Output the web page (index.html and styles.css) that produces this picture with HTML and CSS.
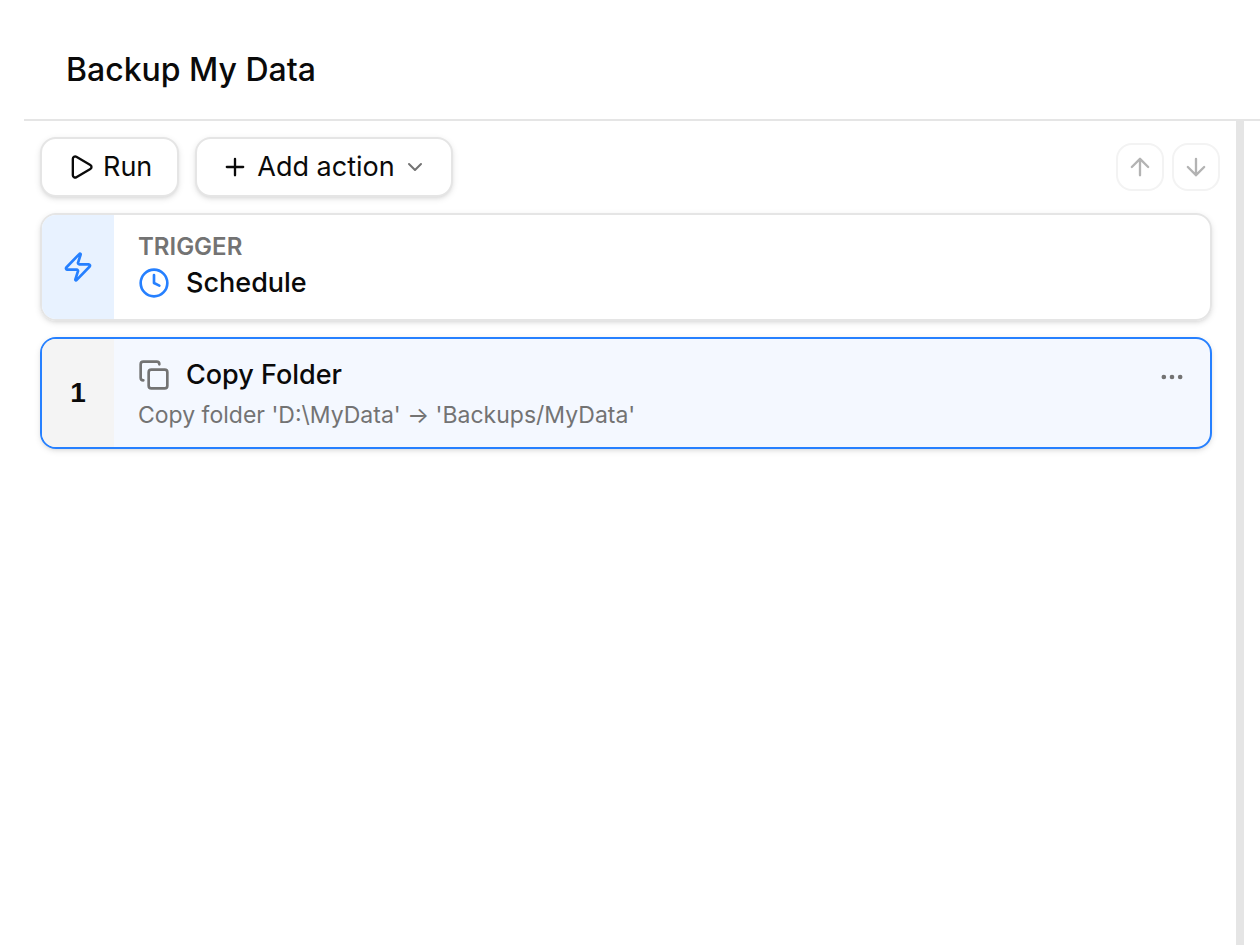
FILE: index.html
```html
<!DOCTYPE html>
<html lang="en">
<head>
    <meta charset="UTF-8">
    <meta name="viewport" content="width=device-width, initial-scale=1.0">
    <title>Backup My Data</title>
    <link rel="stylesheet" href="styles.css">
</head>
<body>
    <div class="app">
        <header class="header">
            <h1>Backup My Data</h1>
        </header>
        <div class="workspace">
            <main class="editor">
                <div class="toolbar">
                    <button class="btn btn-run" type="button">
                        <svg class="icon" viewBox="0 0 24 24"><path d="M5 5a2 2 0 0 1 3.008-1.728l11.997 6.998a2 2 0 0 1 .003 3.458l-12 7A2 2 0 0 1 5 19z"/></svg>
                        <span>Run</span>
                    </button>
                    <button class="btn" type="button">
                        <svg class="icon" viewBox="0 0 24 24"><path d="M5 12h14M12 5v14"/></svg>
                        <span>Add action</span>
                        <svg class="icon icon-chevron" viewBox="0 0 24 24"><path d="m6 9 6 6 6-6"/></svg>
                    </button>
                    <div class="move">
                        <button class="btn-move" type="button" aria-label="Move up" disabled>
                            <svg class="icon" viewBox="0 0 24 24"><path d="m5 12 7-7 7 7M12 19V5"/></svg>
                        </button>
                        <button class="btn-move" type="button" aria-label="Move down" disabled>
                            <svg class="icon" viewBox="0 0 24 24"><path d="M12 5v14M19 12l-7 7-7-7"/></svg>
                        </button>
                    </div>
                </div>
                <section class="card">
                    <div class="rail rail-trigger">
                        <svg class="icon icon-large" viewBox="0 0 24 24"><path d="M4 14a1 1 0 0 1-.78-1.63l9.9-10.2a.5.5 0 0 1 .86.46l-1.92 6.02A1 1 0 0 0 13 10h7a1 1 0 0 1 .78 1.63l-9.9 10.2a.5.5 0 0 1-.86-.46l1.92-6.02A1 1 0 0 0 11 14z"/></svg>
                    </div>
                    <div class="card-body">
                        <p class="label">TRIGGER</p>
                        <div class="card-title">
                            <svg class="icon icon-large icon-clock" viewBox="0 0 24 24"><circle cx="12" cy="12" r="10"/><path d="M12 6v6l4 2"/></svg>
                            <h2>Schedule</h2>
                        </div>
                    </div>
                </section>
                <section class="card card-selected">
                    <div class="rail rail-number">1</div>
                    <div class="card-body">
                        <div class="card-title">
                            <svg class="icon icon-large icon-copy" viewBox="0 0 24 24"><rect x="8" y="8" width="14" height="14" rx="2"/><path d="M4 16c-1.100 0-2-.9-2-2V4c0-1.100.9-2 2-2h10c1.100 0 2 .9 2 2"/></svg>
                            <h2>Copy Folder</h2>
                        </div>
                        <p class="summary">Copy folder 'D:\MyData' → 'Backups/MyData'</p>
                    </div>
                    <button class="btn-more" type="button" aria-label="More">
                        <svg class="icon" viewBox="0 0 24 24"><circle cx="12" cy="12" r="1"/><circle cx="19" cy="12" r="1"/><circle cx="5" cy="12" r="1"/></svg>
                    </button>
                </section>
            </main>
            <div class="splitter"></div>
        </div>
    </div>
</body>
</html>
```
FILE: styles.css
```css
* {
    box-sizing: border-box;
}
body {
    margin: 0;
    background: #fff;
    color: #0a0a0a;
    font-family: Inter, "Liberation Sans", sans-serif;
}
h1, h2, p {
    margin: 0;
}
button {
    font: inherit;
    color: inherit;
    background: #fff;
    padding: 0;
}
.app {
    display: flex;
    flex-direction: column;
    min-height: 100vh;
    padding-left: 24px;
}
.header {
    padding: 50px 42px 29px;
    border-bottom: 2px solid #e5e5e5;
}
.header h1 {
    font-size: 32px;
    line-height: 40px;
    font-weight: 500;
}
.workspace {
    display: flex;
    flex: 1;
}
.editor {
    flex: 1;
    padding: 16px 24px 16px 16px;
}
.splitter {
    width: 8px;
    margin-right: 16px;
    background: #e5e5e5;
}
.icon {
    display: block;
    flex: none;
    width: 28px;
    height: 28px;
    fill: none;
    stroke: currentColor;
    stroke-width: 2;
    stroke-linecap: round;
    stroke-linejoin: round;
}
.icon-large {
    width: 32px;
    height: 32px;
}
.toolbar {
    display: flex;
    align-items: center;
    gap: 16px;
    margin-bottom: 16px;
}
.btn {
    display: flex;
    align-items: center;
    gap: 8px;
    height: 60px;
    padding: 0 24px;
    border: 2px solid #e5e5e5;
    border-radius: 16px;
    box-shadow: 0 2px 6px rgba(0, 0, 0, 0.1), 0 2px 4px -2px rgba(0, 0, 0, 0.1);
    font-size: 27px;
    line-height: 40px;
}
.btn-run {
    padding: 0 25px;
}
.icon-chevron {
    width: 24px;
    height: 24px;
    color: #737373;
}
.move {
    display: flex;
    gap: 8px;
    margin-left: auto;
    margin-right: -8px;
}
.btn-move {
    display: grid;
    place-items: center;
    width: 48px;
    height: 48px;
    border: 2px solid #f3f3f3;
    border-radius: 16px;
    color: #b3b3b3;
}
.card {
    display: flex;
    margin-bottom: 16px;
    border: 2px solid #e5e5e5;
    border-radius: 16px;
    box-shadow: 0 2px 6px rgba(0, 0, 0, 0.1), 0 2px 4px -2px rgba(0, 0, 0, 0.1);
    overflow: hidden;
}
.card-selected {
    border-color: #2680ff;
    background: #f4f8ff;
}
.rail {
    display: grid;
    place-items: center;
    flex: none;
    width: 72px;
}
.rail-trigger {
    background: #e8f2ff;
    color: #2680ff;
}
.rail-number {
    background: #f4f4f4;
    font-family: "Liberation Sans", sans-serif;
    font-size: 28px;
    font-weight: 700;
}
.card-body {
    flex: 1;
    padding: 16px 24px;
}
.card-title {
    display: flex;
    align-items: center;
    gap: 16px;
}
.card-title h2 {
    font-size: 27px;
    line-height: 40px;
    font-weight: 500;
}
.label {
    color: #737373;
    font-size: 24px;
    line-height: 32px;
    font-weight: 600;
}
.summary {
    padding-top: 4px;
    color: #737373;
    font-size: 23px;
    line-height: 32px;
}
.icon-clock {
    color: #2680ff;
}
.icon-copy {
    color: #737373;
}
.btn-more {
    align-self: flex-start;
    margin: 24px 24px 0 0;
    border: 0;
    background: none;
    color: #737373;
}
```
